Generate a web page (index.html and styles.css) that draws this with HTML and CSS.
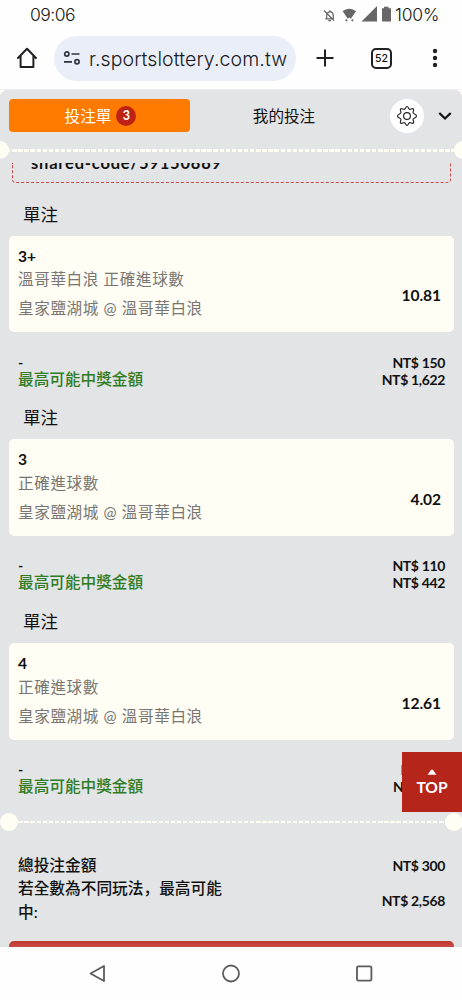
FILE: index.html
```html
<!DOCTYPE html>
<html lang="zh-Hant">
<head>
<meta charset="utf-8">
<title>投注單</title>
<link rel="stylesheet" href="styles.css">
</head>
<body>
<div class="phone">
  <div class="status">
    <span class="clock">09:06</span>
    <svg class="status-icons" width="71" height="20" viewBox="0 0 71 20">
      <g fill="none" stroke="#666" stroke-width="1.2"><path d="M3.300 12.800h8V9.500c0-2-1-3.500-3-3.900-2.300.4-3.600 1.900-3.600 3.900v3.300M7.800 4.200v1.500M6.300 14.600h2.800M2 4.500l10 10"/></g>
      <path fill="#666" d="M20.700 5.200c4-3.400 9.300-3.400 13.300 0l-5.200 7.600-1.500-1.400-1.500 1.400zM23 14.300l1.500-1.300 1.200 1.300-1.200 1.200zM29 14.300l1.500-1.300 1.200 1.300-1.200 1.200zM39.500 15.500L55 0v15.500zM60 2.200h2V.7h4.500v1.500H69v13.300h-9z"/>
    </svg>
    <span class="battery">100%</span>
  </div>
  <div class="toolbar">
    <svg class="home" width="22" height="22" viewBox="0 0 22 22" fill="none" stroke="#202124" stroke-width="2" stroke-linejoin="round" stroke-linecap="round"><path d="M2 11l9-9.300L20 11M4.600 9v11h12.800V9"/></svg>
    <div class="address">
      <svg width="18" height="16" viewBox="0 0 18 16" fill="none" stroke="#303338" stroke-width="1.700"><circle cx="3.800" cy="4" r="2.100"/><path d="M8.500 4h8M1 11.800h8"/><circle cx="14" cy="11.800" r="2.100"/></svg>
      <span>r.sportslottery.com.tw</span>
    </div>
    <svg class="plus" width="18" height="18" viewBox="0 0 18 18" stroke="#202124" stroke-width="2"><path d="M.5 9h17M9 .5v17"/></svg>
    <span class="tabs">52</span>
    <svg class="more" width="6" height="20" viewBox="0 0 6 20" fill="#202124"><circle cx="3" cy="3" r="2.200"/><circle cx="3" cy="10" r="2.200"/><circle cx="3" cy="17" r="2.200"/></svg>
  </div>
  <main class="page">
    <header class="slip-head">
      <div class="tab-active"><span>投注單</span><b>3</b></div>
      <div class="tab">我的投注</div>
      <div class="gear">
        <svg width="22" height="22" viewBox="0 0 22 22" fill="none" stroke="#222" stroke-width="1.150" stroke-linejoin="round"><circle cx="11" cy="11" r="3.400"/><path d="M11 1.500c1.500 0 1.300 2.300 2.500 2.800s2.800-1.400 3.900-.3-.8 2.700-.3 3.900 3.400 1 3.400 3.100-2.900 1.900-3.400 3.100 1.400 2.800.3 3.900-2.700-.8-3.900-.3-1 2.800-2.500 2.800-1.300-2.300-2.500-2.800-2.800 1.400-3.900.3.800-2.700.3-3.900-3.400-1-3.400-3.100 2.900-1.900 3.400-3.100-1.400-2.800-.3-3.900 2.700.8 3.900.3 1-2.800 2.500-2.800z"/></svg>
      </div>
      <svg class="chevron" width="14" height="10" viewBox="0 0 14 10" fill="none" stroke="#111" stroke-width="2.300"><path d="M1.300 2L7 7.500 12.700 2"/></svg>
    </header>
    <div class="divider divider-head"></div>
    <div class="scroll">
      <div class="share">shared-code/59150889</div>

      <section class="bet">
        <h2>單注</h2>
        <div class="card">
          <div class="info"><strong>3+</strong><p>溫哥華白浪 正確進球數</p><p>皇家鹽湖城 @ 溫哥華白浪</p></div>
          <span class="odds">10.81</span>
        </div>
        <div class="amounts">
          <div class="line"><span>-</span><span>NT$ 150</span></div>
          <div class="line"><span class="win">最高可能中獎金額</span><span>NT$ 1,622</span></div>
        </div>
      </section>

      <section class="bet">
        <h2>單注</h2>
        <div class="card">
          <div class="info"><strong>3</strong><p>正確進球數</p><p>皇家鹽湖城 @ 溫哥華白浪</p></div>
          <span class="odds">4.02</span>
        </div>
        <div class="amounts">
          <div class="line"><span>-</span><span>NT$ 110</span></div>
          <div class="line"><span class="win">最高可能中獎金額</span><span>NT$ 442</span></div>
        </div>
      </section>

      <section class="bet">
        <h2>單注</h2>
        <div class="card">
          <div class="info"><strong>4</strong><p>正確進球數</p><p>皇家鹽湖城 @ 溫哥華白浪</p></div>
          <span class="odds">12.61</span>
        </div>
        <div class="amounts">
          <div class="line"><span>-</span><span class="covered">N</span></div>
          <div class="line"><span class="win">最高可能中獎金額</span><span class="covered low">N</span></div>
        </div>
      </section>
    </div>
    <div class="divider divider-foot"></div>
    <div class="totals">
      <div class="total"><span class="label">總投注金額</span><span>NT$ 300</span></div>
      <div class="total"><span class="label">若全數為不同玩法<span class="comma" lang="zh-Hans">，</span>最高可能中:</span><span>NT$ 2,568</span></div>
    </div>
    <div class="submit"></div>
    <div class="top-button">
      <svg width="10" height="6" viewBox="0 0 10 6" fill="#fff"><path d="M.5 5.700L4.200.8h1.600L9.500 5.700z"/></svg>
      <span>TOP</span>
    </div>
  </main>
  <nav class="nav">
    <svg width="18" height="20" viewBox="0 0 18 20" fill="none" stroke="#5c5c5c" stroke-width="1.800" stroke-linejoin="round"><path d="M15 2v15L1.500 9.500z"/></svg>
    <svg width="20" height="20" viewBox="0 0 20 20" fill="none" stroke="#5c5c5c" stroke-width="1.800"><circle cx="10" cy="9.500" r="8"/></svg>
    <svg width="18" height="20" viewBox="0 0 18 20" fill="none" stroke="#5c5c5c" stroke-width="1.800"><rect x="2" y="2.300" width="14.400" height="14.400" rx="1.500"/></svg>
  </nav>
</div>
</body>
</html>
```
FILE: styles.css
```css
* { box-sizing: border-box; }
body {
  margin: 0;
  background: #fefefe;
  color: #111;
  font-family: Lato, "Noto Sans CJK TC", sans-serif;
}
.phone { width: 462px; height: 1000px; overflow: hidden; display: flex; flex-direction: column; }

.status {
  height: 28px;
  flex: none;
  display: flex;
  align-items: center;
  padding: 2px 0 0 30px;
  font: 300 17.5px/26px Inter, sans-serif;
  color: #161616;
}
.clock { width: 292px; letter-spacing: -.5px; }
.status-icons { flex: none; transform: translateY(1px); }
.battery { margin-left: 2px; letter-spacing: -.2px; }

.toolbar { height: 62px; flex: none; display: flex; align-items: center; padding: 0 0 1px 16px; border-bottom: 1px solid #efefef; }
.home { flex: none; }
.address {
  margin-left: 16px;
  width: 242px;
  height: 45px;
  border-radius: 23px;
  background: #e9eef9;
  display: flex;
  align-items: center;
  padding-left: 9px;
  font: 300 19.500px/24px Inter, sans-serif;
  color: #1a1a1a;
}
.address span { margin: 1px 0 0 8px; white-space: nowrap; letter-spacing: .1px; }
.plus { margin-left: 20px; }
.tabs {
  margin-left: 37px;
  width: 21px;
  height: 21px;
  border: 2px solid #202124;
  border-radius: 5px;
  font: 500 10.5px/17px Inter, sans-serif;
  text-align: center;
}
.more { margin-left: 40px; }

.page {
  position: relative;
  height: 857px;
  flex: none;
  overflow: hidden;
  display: flex;
  flex-direction: column;
  background: linear-gradient(#e3e4e6, #e3e4e6) 0 8px no-repeat, radial-gradient(circle at 8px 8px, #e3e4e6 8px, #fffdf3 8.500px) 0 0 / 8px 8px no-repeat, radial-gradient(circle at 0 8px, #e3e4e6 8px, #fffdf3 8.500px) 100% 0 / 8px 8px no-repeat, #e3e4e6;
}
.slip-head { height: 58px; flex: none; display: flex; align-items: flex-start; padding: 9px 0 0 9px; font-size: 15.600px; }
.tab-active {
  width: 181px;
  height: 33px;
  border-radius: 4px;
  background: #ff7b00;
  color: #fff;
  display: flex;
  align-items: center;
  justify-content: center;
  gap: 5px;
  padding-left: 2px;
}
.tab-active span { margin-top: -2px; }
.tab-active b {
  width: 20px;
  height: 20px;
  border-radius: 50%;
  background: #bf2114;
  font-size: 12.500px;
  line-height: 20px;
  text-align: center;
}
.tab { width: 188px; text-align: center; line-height: 34px; }
.gear {
  margin-left: 12px;
  width: 34px;
  height: 34px;
  border-radius: 50%;
  background: #fefefe;
  display: flex;
  align-items: center;
  justify-content: center;
}
.chevron { margin: 12px 0 0 14px; }

.divider { position: relative; flex: none; height: 3px; background: repeating-linear-gradient(90deg, #fffef4 0 4.300px, transparent 4.300px 6.100px); }
.divider::before, .divider::after {
  content: "";
  position: absolute;
  top: -8px;
  width: 18px;
  height: 18px;
  border-radius: 50%;
  background: #fffef3;
}
.divider-head { margin: 1px 0 11px; }
.divider-head::before { left: -9px; }
.divider-head::after { right: -10px; }
.divider-foot { height: 2px; margin: 0 8px 0 0; }
.divider-foot::before { left: 0; }
.divider-foot::after { right: -9px; }

.scroll { height: 658px; flex: none; overflow: hidden; }
.share {
  height: 19.500px;
  margin: 0 11px 0 12px;
  padding-left: 18px;
  border: 1px dashed #c9484a;
  border-top: 0;
  border-radius: 0 0 4px 4px;
  font-weight: 700;
  font-size: 16.500px;
  line-height: 0;
  letter-spacing: .8px;
  color: #111;
}
.bet { height: 203.900px; }
.bet h2 { margin: 0; padding: 19px 0 0 23px; height: 53px; font-size: 17.500px; font-weight: 400; line-height: 26px; }
.card {
  margin: 0 8px 0 9px;
  height: 96.500px;
  border-radius: 5px;
  background: #fffdf4;
  display: flex;
  justify-content: space-between;
  padding: 11px 13px 0 9px;
}
.info strong { display: block; font-size: 15.600px; line-height: 18.500px; }
.info p { margin: 0; color: #777672; font-size: 15.600px; line-height: 29px; letter-spacing: .6px; font-weight: 400; }
.odds { margin-top: 38.500px; font-size: 15.600px; line-height: 20px; font-weight: 700; letter-spacing: -.1px; }
.amounts { padding: 21.500px 17px 0 18px; }
.line { display: flex; justify-content: space-between; height: 17px; line-height: 17px; font-size: 14px; font-weight: 700; letter-spacing: -.35px; }
.line .win { color: #2f7c25; font-size: 15.650px; font-weight: 500; letter-spacing: 0; }
.line .covered { width: 44.500px; }
.line .low { width: 52px; }

.totals { flex: none; height: 118px; padding: 31px 17px 0 18px; }
.total { display: flex; align-items: center; justify-content: space-between; font-size: 14px; font-weight: 700; line-height: 23.400px; letter-spacing: -.35px; }
.label { width: 210px; font-size: 15.700px; font-weight: 500; letter-spacing: 0; }
.comma { font-family: "Noto Sans CJK SC", sans-serif; line-height: 1; }
.submit { flex: none; height: 6px; margin: 0 8px 0 9px; border-radius: 5px 5px 0 0; background: linear-gradient(#bd382f, #c94b42); }
.top-button {
  position: absolute;
  right: 0;
  top: 662px;
  width: 60px;
  height: 60px;
  background: #b5251a;
  color: #fff;
  display: flex;
  flex-direction: column;
  align-items: center;
  padding-top: 17px;
  font-size: 15.600px;
  line-height: 25px;
  font-weight: 700;
}
.top-button svg { flex: none; }
.nav { height: 53px; display: flex; align-items: center; justify-content: space-between; padding: 0 89px 0 89px; }
```
